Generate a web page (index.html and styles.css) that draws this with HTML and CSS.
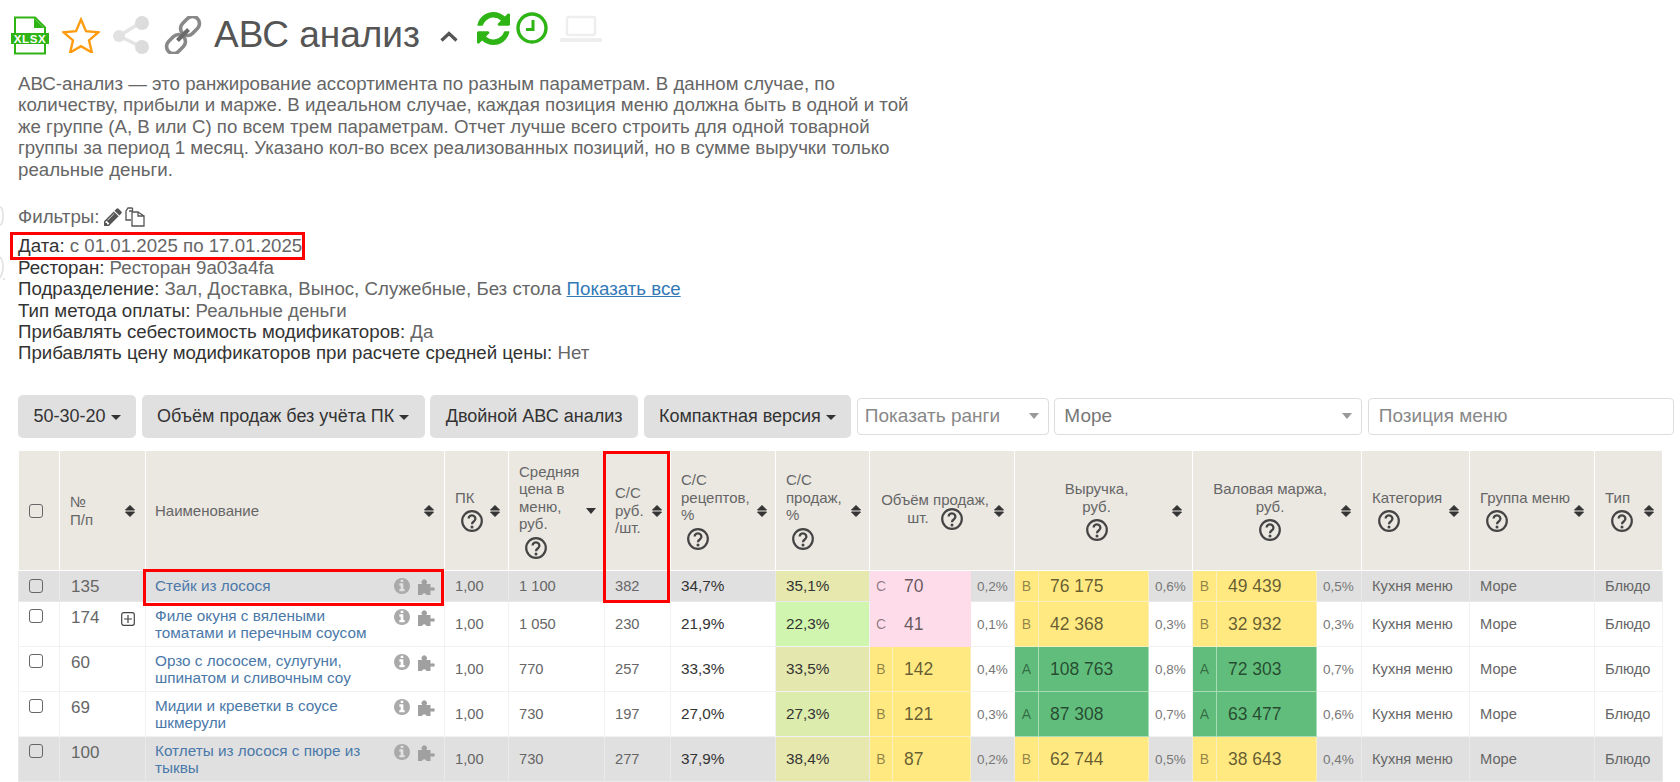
FILE: index.html
```html
<!DOCTYPE html>
<html lang="ru">
<head>
<meta charset="utf-8">
<title>АВС анализ</title>
<link rel="stylesheet" href="styles.css">
</head>
<body>
<svg class="defs" width="0" height="0" aria-hidden="true">
  <symbol id="q" viewBox="0 0 22 22"><circle cx="11" cy="11" r="9.8" fill="none" stroke="#444" stroke-width="2.2"/><path d="M7.6 8.6a3.4 3.3 0 1 1 5.4 2.7c-1.3.9-2 1.5-2 3" fill="none" stroke="#444" stroke-width="2.3"/><circle cx="11" cy="17" r="1.5" fill="#444"/></symbol>
  <symbol id="sort" viewBox="0 0 10 12"><path d="M5 .5 9.5 5H.5zM.5 7h9L5 11.5z" fill="#333" stroke="#333" stroke-linejoin="round"/></symbol>
  <symbol id="info" viewBox="128 128 1536 1536"><path fill="#aaa" d="M1152 1376v-160q0-14-9-23t-23-9h-96v-512q0-14-9-23t-23-9h-320q-14 0-23 9t-9 23v160q0 14 9 23t23 9h96v320h-96q-14 0-23 9t-9 23v160q0 14 9 23t23 9h448q14 0 23-9t9-23zm-128-896v-160q0-14-9-23t-23-9h-192q-14 0-23 9t-9 23v160q0 14 9 23t23 9h192q14 0 23-9t9-23zm640 416q0 209-103 385.5t-279.5 279.5-385.5 103-385.5-103-279.5-279.5-103-385.5 103-385.5 279.5-279.5 385.5-103 385.5 103 279.5 279.5 103 385.5z"/></symbol>
  <symbol id="puzzle" viewBox="0 0 18 18"><path fill="#a0a0a0" d="M0 6h4.300a2.700 2.700 0 1 1 3.900 0H12.500v3.400h2a1.700 1.700 0 1 1 0 3.200h-2V17H8.500a2.300 2.300 0 0 0-4.500 0H0z"/></symbol>
</svg>
<svg class="edge" width="6" height="76" viewBox="0 0 6 76" aria-hidden="true"><path d="M0 2a3 9 0 0 1 0 18M0 52c4 4 4 15 0 21" fill="none" stroke="#e2e2e2" stroke-width="1.600"/><circle cx="4" cy="74" r=".7" fill="#bbb"/></svg>
<main class="page">
  <header class="title-bar">
    <svg class="i-xlsx" width="40" height="40" viewBox="0 0 40 40" aria-hidden="true"><path d="M5 1.500h20l10 10v26H5z" fill="#fff" stroke="#2eb415" stroke-width="2"/><path d="M24 2v10h10z" fill="#2eb415"/><rect x="1" y="17" width="38" height="11" fill="#2eb415"/><text x="20" y="26.600" text-anchor="middle" class="xlsx-text">XLSX</text></svg>
    <svg class="i-star" width="38" height="36" viewBox="0 0 38 36" aria-hidden="true"><path d="M19 2.500l5 11.600 12.500 1.100-9.500 8.200 2.900 12.200L19 29.100l-10.900 6.500 2.900-12.200-9.500-8.200 12.500-1.100z" fill="none" stroke="#ff9c12" stroke-width="2.400" stroke-linejoin="miter"/></svg>
    <svg class="i-share" width="37" height="38" viewBox="0 0 37 38" aria-hidden="true"><path d="M6 20 28.500 6M6 20l22.500 11" stroke="#e4e4e4" stroke-width="3.500" fill="none"/><circle cx="6" cy="20" r="6" fill="#e2e2e2"/><circle cx="29" cy="7" r="7" fill="#dcdcdc"/><circle cx="29" cy="31" r="7" fill="#dcdcdc"/></svg>
    <svg class="i-link" width="38" height="38" viewBox="0 0 38 38" aria-hidden="true"><g fill="none" stroke="#888" stroke-width="3.600"><rect x="15.500" y="3" width="21" height="14" rx="7" transform="rotate(-45 26 10)"/><rect x="1.500" y="21" width="21" height="14" rx="7" transform="rotate(-45 12 28)"/></g><path d="M13.500 24.500 24.500 13.500" stroke="#6a6a6a" stroke-width="4"/></svg>
    <h1 class="title">АВС анализ</h1>
    <svg class="i-chev" width="18" height="11" viewBox="0 0 18 11" aria-hidden="true"><path d="M1.500 9.500 9 2.500l7.500 7" fill="none" stroke="#555" stroke-width="3.200"/></svg>
    <svg class="i-refresh" width="33" height="33" viewBox="128 128 1536 1536" aria-hidden="true"><path fill="#2eb415" d="M1639 1056q0 5-1 7-64 268-268 434.500t-478 166.500q-146 0-282.500-55t-243.500-157l-129 129q-19 19-45 19t-45-19-19-45v-448q0-26 19-45t45-19h448q26 0 45 19t19 45-19 45l-137 137q71 66 161 102t187 36q134 0 250-65t186-179q11-17 53-117 8-23 30-23h192q13 0 22.500 9.500t9.500 22.500zm25-800v448q0 26-19 45t-45 19h-448q-26 0-45-19t-19-45 19-45l138-138q-148-137-349-137-134 0-250 65t-186 179q-11 17-53 117-8 23-30 23h-199q-13 0-22.500-9.500t-9.500-22.500v-7q65-268 270-434.500t480-166.500q146 0 284 55.500t245 156.500l130-129q19-19 45-19t45 19 19 45z"/></svg>
    <svg class="i-clock" width="32" height="32" viewBox="0 0 32 32" aria-hidden="true"><circle cx="16" cy="16" r="14" fill="none" stroke="#2eb415" stroke-width="3.400"/><path d="M17 8v9.500H10" fill="none" stroke="#2eb415" stroke-width="3"/></svg>
    <svg class="i-laptop" width="42" height="28" viewBox="0 0 42 28" aria-hidden="true"><rect x="7" y="2" width="28" height="18" rx="2" fill="none" stroke="#eee" stroke-width="2.500"/><rect x="0" y="23" width="42" height="4" rx="1.500" fill="#eee"/></svg>
  </header>

  <p class="desc">АВС-анализ — это ранжирование ассортимента по разным параметрам. В данном случае, по количеству, прибыли и марже. В идеальном случае, каждая позиция меню должна быть в одной и той же группе (А, В или С) по всем трем параметрам. Отчет лучше всего строить для одной товарной группы за период 1 месяц. Указано кол-во всех реализованных позиций, но в сумме выручки только реальные деньги.</p>

  <div class="filter-title">Фильтры:
    <svg class="i-pencil" width="18" height="18" viewBox="128 128 1536 1536" aria-hidden="true"><path fill="#555" d="M491 1536l91-91-235-235-91 91v107h128v128h107zm523-928q0-22-22-22-10 0-17 7l-542 542q-7 7-7 17 0 22 22 22 10 0 17-7l542-542q7-7 7-17zm-54-192l416 416-832 832h-416v-416zm683 96q0 53-37 90l-166 166-416-416 166-165q36-38 90-38 53 0 91 38l235 234q37 39 37 91z"/></svg>
    <svg class="i-copy" width="20" height="20" viewBox="0 0 20 20" aria-hidden="true"><path d="M7.500 1H3L1 4v9h5M7.500 1v3H4" fill="none" stroke="#555" stroke-width="1.300"/><path d="M7 5h6v4h6v10H7zM13 5l6 4" fill="#fff" stroke="#555" stroke-width="1.300"/></svg>
  </div>
  <div class="filters">
    <div><span class="date-box"><b class="key">Дата:</b> с 01.01.2025 по 17.01.2025</span></div>
    <div><b class="key">Ресторан:</b> Ресторан 9a03a4fa</div>
    <div><b class="key">Подразделение:</b> Зал, Доставка, Вынос, Служебные, Без стола <a class="more" href="#">Показать все</a></div>
    <div><b class="key">Тип метода оплаты:</b> Реальные деньги</div>
    <div><b class="key">Прибавлять себестоимость модификаторов:</b> Да</div>
    <div><b class="key">Прибавлять цену модификаторов при расчете средней цены:</b> Нет</div>
  </div>

  <div class="toolbar">
    <button class="btn" type="button">50-30-20<i class="caret"></i></button>
    <button class="btn" type="button">Объём продаж без учёта ПК<i class="caret"></i></button>
    <button class="btn" type="button">Двойной АВС анализ</button>
    <button class="btn" type="button">Компактная версия<i class="caret"></i></button>
    <div class="select select-rank"><span class="ph">Показать ранги</span><i class="arrow"></i></div>
    <div class="select select-group"><span class="val">Море</span><i class="arrow"></i></div>
    <input class="search" type="text" placeholder="Позиция меню">
  </div>

  <div class="table-wrap">
    <table class="abc">
      <colgroup>
        <col class="c41"><col class="c86"><col class="c299"><col class="c64"><col class="c96"><col class="c66"><col class="c105"><col class="c94">
        <col class="c23"><col class="c78"><col class="c44"><col class="c24"><col class="c110"><col class="c44"><col class="c24"><col class="c100"><col class="c45">
        <col class="c108"><col class="c125"><col class="c68">
      </colgroup>
      <thead>
        <tr>
          <th class="th-check"><input class="check" type="checkbox"></th>
          <th><div class="h"><span class="hl">№<br>П/п</span><svg class="sort"><use href="#sort"/></svg></div></th>
          <th class="th-name"><div class="h"><span class="hl">Наименование</span><svg class="sort"><use href="#sort"/></svg></div></th>
          <th class="tight"><div class="h"><span class="hl">ПК<svg class="q qc"><use href="#q"/></svg></span><svg class="sort"><use href="#sort"/></svg></div></th>
          <th class="tight"><div class="h"><span class="hl">Средняя цена в меню, руб.<svg class="q qc"><use href="#q"/></svg></span><i class="sort-down"></i></div></th>
          <th class="tight"><div class="h"><span class="hl">С/С<br>руб.<br>/шт.</span><svg class="sort"><use href="#sort"/></svg></div></th>
          <th class="tight"><div class="h"><span class="hl">С/С рецептов, %<svg class="q qc"><use href="#q"/></svg></span><svg class="sort"><use href="#sort"/></svg></div></th>
          <th class="tight"><div class="h"><span class="hl">С/С продаж, %<svg class="q qc"><use href="#q"/></svg></span><svg class="sort"><use href="#sort"/></svg></div></th>
          <th colspan="3"><div class="h"><span class="hl hc">Объём продаж,<br>шт. <svg class="q qi"><use href="#q"/></svg></span><svg class="sort"><use href="#sort"/></svg></div></th>
          <th colspan="3"><div class="h"><span class="hl hc">Выручка,<br>руб.<svg class="q qm"><use href="#q"/></svg></span><svg class="sort"><use href="#sort"/></svg></div></th>
          <th colspan="3"><div class="h"><span class="hl hc">Валовая маржа,<br>руб.<svg class="q qm"><use href="#q"/></svg></span><svg class="sort"><use href="#sort"/></svg></div></th>
          <th><div class="h"><span class="hl">Категория<svg class="q qc"><use href="#q"/></svg></span><svg class="sort"><use href="#sort"/></svg></div></th>
          <th><div class="h"><span class="hl">Группа меню<svg class="q qc"><use href="#q"/></svg></span><svg class="sort"><use href="#sort"/></svg></div></th>
          <th class="tight"><div class="h"><span class="hl">Тип<svg class="q qc"><use href="#q"/></svg></span><svg class="sort"><use href="#sort"/></svg></div></th>
        </tr>
      </thead>
      <tbody>
        <tr class="row-short alt">
          <td class="top"><input class="check" type="checkbox"></td>
          <td class="top num"><div class="num-in">135</div></td>
          <td class="top name"><div class="name-in"><a class="item" href="#">Стейк из лосося</a><span class="tools"><svg class="i16"><use href="#info"/></svg><svg class="i18"><use href="#puzzle"/></svg></span></div></td>
          <td class="sm">1,00</td><td class="sm">1 100</td><td class="sm">382</td><td class="dk">34,7%</td><td class="dk s351">35,1%</td>
          <td class="rk pink">С</td><td class="v pink">70</td><td class="pct">0,2%</td>
          <td class="rk yel">В</td><td class="v yel">76 175</td><td class="pct">0,6%</td>
          <td class="rk yel">В</td><td class="v yel">49 439</td><td class="pct">0,5%</td>
          <td class="sm">Кухня меню</td><td class="sm">Море</td><td class="sm">Блюдо</td>
        </tr>
        <tr>
          <td class="top"><input class="check" type="checkbox"></td>
          <td class="top num"><div class="num-in">174<svg class="plus" width="14" height="14" viewBox="0 0 14 14" aria-hidden="true"><rect x=".7" y=".7" width="12.600" height="12.600" rx="2" fill="none" stroke="#444" stroke-width="1.200"/><path d="M7 3v8M3 7h8" stroke="#444" stroke-width="1.200"/></svg></div></td>
          <td class="top name"><div class="name-in"><a class="item" href="#">Филе окуня с вялеными томатами и перечным соусом</a><span class="tools"><svg class="i16"><use href="#info"/></svg><svg class="i18"><use href="#puzzle"/></svg></span></div></td>
          <td class="sm">1,00</td><td class="sm">1 050</td><td class="sm">230</td><td class="dk">21,9%</td><td class="dk s223">22,3%</td>
          <td class="rk pink">С</td><td class="v pink">41</td><td class="pct">0,1%</td>
          <td class="rk yel">В</td><td class="v yel">42 368</td><td class="pct">0,3%</td>
          <td class="rk yel">В</td><td class="v yel">32 932</td><td class="pct">0,3%</td>
          <td class="sm">Кухня меню</td><td class="sm">Море</td><td class="sm">Блюдо</td>
        </tr>
        <tr>
          <td class="top"><input class="check" type="checkbox"></td>
          <td class="top num"><div class="num-in">60</div></td>
          <td class="top name"><div class="name-in"><a class="item" href="#">Орзо с лососем, сулугуни, шпинатом и сливочным соу</a><span class="tools"><svg class="i16"><use href="#info"/></svg><svg class="i18"><use href="#puzzle"/></svg></span></div></td>
          <td class="sm">1,00</td><td class="sm">770</td><td class="sm">257</td><td class="dk">33,3%</td><td class="dk s335">33,5%</td>
          <td class="rk yel">В</td><td class="v yel">142</td><td class="pct">0,4%</td>
          <td class="rk grn">А</td><td class="v grn">108 763</td><td class="pct">0,8%</td>
          <td class="rk grn">А</td><td class="v grn">72 303</td><td class="pct">0,7%</td>
          <td class="sm">Кухня меню</td><td class="sm">Море</td><td class="sm">Блюдо</td>
        </tr>
        <tr>
          <td class="top"><input class="check" type="checkbox"></td>
          <td class="top num"><div class="num-in">69</div></td>
          <td class="top name"><div class="name-in"><a class="item" href="#">Мидии и креветки в соусе шкмерули</a><span class="tools"><svg class="i16"><use href="#info"/></svg><svg class="i18"><use href="#puzzle"/></svg></span></div></td>
          <td class="sm">1,00</td><td class="sm">730</td><td class="sm">197</td><td class="dk">27,0%</td><td class="dk s273">27,3%</td>
          <td class="rk yel">В</td><td class="v yel">121</td><td class="pct">0,3%</td>
          <td class="rk grn">А</td><td class="v grn">87 308</td><td class="pct">0,7%</td>
          <td class="rk grn">А</td><td class="v grn">63 477</td><td class="pct">0,6%</td>
          <td class="sm">Кухня меню</td><td class="sm">Море</td><td class="sm">Блюдо</td>
        </tr>
        <tr class="alt">
          <td class="top"><input class="check" type="checkbox"></td>
          <td class="top num"><div class="num-in">100</div></td>
          <td class="top name"><div class="name-in"><a class="item" href="#">Котлеты из лосося с пюре из тыквы</a><span class="tools"><svg class="i16"><use href="#info"/></svg><svg class="i18"><use href="#puzzle"/></svg></span></div></td>
          <td class="sm">1,00</td><td class="sm">730</td><td class="sm">277</td><td class="dk">37,9%</td><td class="dk s384">38,4%</td>
          <td class="rk yel">В</td><td class="v yel">87</td><td class="pct">0,2%</td>
          <td class="rk yel">В</td><td class="v yel">62 744</td><td class="pct">0,5%</td>
          <td class="rk yel">В</td><td class="v yel">38 643</td><td class="pct">0,4%</td>
          <td class="sm">Кухня меню</td><td class="sm">Море</td><td class="sm">Блюдо</td>
        </tr>
      </tbody>
    </table>
    <div class="mark mark-name"></div>
    <div class="mark mark-cost"></div>
  </div>
</main>
</body>
</html>
```
FILE: styles.css
```css
* { box-sizing: border-box; }
html, body { margin: 0; height: 782px; overflow: hidden; background: #fff; }
body { font-family: "Liberation Sans", Arial, sans-serif; color: #666; position: relative; }
.defs { position: absolute; }
.edge { position: absolute; left: 0; top: 205px; }
.page { padding: 0 6px 0 18px; }

.title-bar { height: 70px; display: flex; align-items: center; margin-left: -8px; }
.i-xlsx { margin: 0 0 -1px 0; flex: none; }
.xlsx-text { font: bold 11.500px "Liberation Sans", sans-serif; fill: #fff; letter-spacing: .6px; }
.i-star { margin-left: 12px; flex: none; }
.i-share { margin-left: 13px; flex: none; }
.i-link { margin-left: 14px; flex: none; }
.title { margin: 0 0 0 12px; font-size: 37px; font-weight: 400; color: #555; line-height: 44px; }
.i-chev { margin-left: 20px; margin-top: 3px; flex: none; }
.i-refresh { margin-left: 19px; margin-top: -14px; flex: none; }
.i-clock { margin-left: 6px; margin-top: -14px; flex: none; }
.i-laptop { margin-left: 12px; margin-top: -12px; flex: none; }

.desc { margin: 3px 0 0; width: 905px; font-size: 18.700px; line-height: 21.430px; color: #666; }
.filter-title { margin-top: 26px; height: 22px; font-size: 18.700px; line-height: 22px; color: #666; display: flex; align-items: center; gap: 3px; }
.i-pencil { margin-left: 2px; }
.filters { margin-top: 7px; font-size: 18.700px; line-height: 21.430px; color: #666; }
.key { font-weight: 400; color: #333; }
.more { color: #337ab7; text-decoration: underline; }
.date-box { position: relative; display: inline-block; }
.date-box::after { content: ""; position: absolute; left: -8px; right: -3px; top: -3px; bottom: -3px; border: 3px solid #f00; }

.toolbar { margin-top: 31px; display: flex; align-items: center; gap: 5.500px; height: 43px; }
.btn { height: 43px; padding: 0 15.500px; border: 0; border-radius: 5px; background: #e0e0e0; color: #333; font: 18px "Liberation Sans", sans-serif; white-space: nowrap; flex: none; }
.caret { display: inline-block; margin-left: 5px; vertical-align: 2px; border-top: 5px solid #333; border-left: 5px solid transparent; border-right: 5px solid transparent; }
.select, .search { height: 37px; border: 1px solid #ddd; border-radius: 4px; background: #fff; font: 19px "Liberation Sans", sans-serif; flex: none; }
.select { display: flex; align-items: center; justify-content: space-between; padding: 0 9px; }
.select-rank { width: 192px; padding-left: 7px; }
.select-group { width: 308px; }
.ph { color: #888; }
.val { color: #777; }
.arrow { border-top: 6px solid #999; border-left: 5px solid transparent; border-right: 5px solid transparent; }
.search { width: 306px; padding: 0 10px; color: #555; }
.search::placeholder { color: #888; opacity: 1; }

.table-wrap { position: relative; margin-top: 13px; width: 1644px; }
.abc { border-collapse: collapse; table-layout: fixed; width: 1644px; font-size: 15px; }
.c41 { width: 41px; } .c86 { width: 86px; } .c299 { width: 299px; } .c64 { width: 64px; } .c96 { width: 96px; }
.c66 { width: 66px; } .c105 { width: 105px; } .c94 { width: 94px; } .c23 { width: 23px; } .c78 { width: 78px; }
.c44 { width: 44px; } .c24 { width: 24px; } .c110 { width: 110px; } .c100 { width: 100px; } .c45 { width: 45px; }
.c108 { width: 108px; } .c125 { width: 125px; } .c68 { width: 68px; }

th { height: 120px; padding: 0 10px; background: #ebe8e2; border: 1px solid #fff; border-top: 0; font-weight: 400; text-align: left; font-size: 15px; line-height: 17.500px; color: #666; vertical-align: middle; }
th.tight { padding: 0 8px 0 10px; }
.th-check { padding: 0 0 0 10px; }
.th-name { padding-left: 9px; }
.h { display: flex; align-items: center; justify-content: space-between; gap: 4px; }
.hl { display: block; }
.hc { flex: 1; text-align: center; }
.sort { width: 10px; height: 12px; flex: none; }
.sort-down { flex: none; border-top: 6px solid #333; border-left: 5px solid transparent; border-right: 5px solid transparent; }
.q { width: 22px; height: 22px; vertical-align: middle; }
.qc { display: block; margin: 4px 0 0 6px; }
.qm { display: block; margin: 4px auto 0; }
.qi { margin-left: 8px; }

td { height: 45px; padding: 0 10px; border: 1px solid #f2f2f2; background: #fff; vertical-align: middle; white-space: nowrap; }
.row-short td { height: 31px; }
.alt td { background: #e0e0e0; border-color: #e9e9e9; }
.top { vertical-align: top; padding-top: 5px; }
.top .check { display: block; margin: 2px 0 0; }
.row-short .top .check { margin-top: 3px; }
.check { appearance: none; width: 14px; height: 14px; margin: 0; border: 1.500px solid #666; border-radius: 3px; background: transparent; display: block; }
td.num { font-size: 17px; color: #666; line-height: 20px; padding-left: 11px; padding-top: 6px; }
.num-in { display: flex; justify-content: space-between; align-items: center; }
.plus { margin-top: 1px; }
.name { white-space: normal; padding-left: 9px; padding-right: 8px; }
.name-in { display: flex; justify-content: space-between; align-items: flex-start; }
.item { width: 225px; color: #4a78a8; text-decoration: none; font-size: 15.300px; line-height: 17px; }
.row-short .item { line-height: 20px; }
.tools { display: flex; gap: 8px; flex: none; margin-top: 2px; }
.i16 { width: 16px; height: 16px; }
.i18 { width: 18px; height: 18px; }
.sm { font-size: 14.700px; color: #666; }
.dk { font-size: 15.300px; color: #333; }
.s351 { background: #e6e8ae !important; }
.s223 { background: #d0f5ae; }
.s335 { background: #e4e8ae; }
.s273 { background: #dbecad; }
.s384 { background: #e6e8ae !important; }
.rk { padding: 0; text-align: center; font-size: 14px; color: rgba(0, 0, 0, .45); }
.v { font-size: 17.500px; color: rgba(0, 0, 0, .62); padding: 0 0 0 11px; }
.pct { padding: 0 0 0 6px; font-size: 13.500px; color: #777; }
.yel, .alt .yel { background: #ffe980; border-color: #f7efc0; }
.pink, .alt .pink { background: #ffdce9; border-color: #ffdce9; }
.grn { background: #61bd7b; border-color: #a9dcb6; }

.mark { position: absolute; border: 3px solid #f00; pointer-events: none; }
.mark-name { left: 125px; top: 118px; width: 301px; height: 37px; }
.mark-cost { left: 585px; top: 0; width: 67px; height: 152px; }
```
